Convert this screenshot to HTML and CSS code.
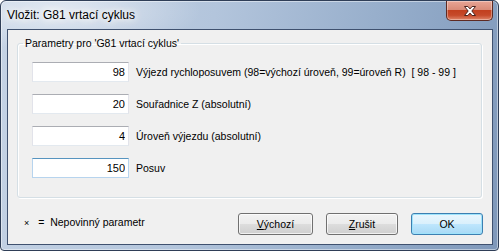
FILE: index.html
```html
<!DOCTYPE html>
<html lang="cs">
<head>
    <meta charset="UTF-8">
    <title>Vložit: G81 vrtací cyklus</title>
    <link rel="stylesheet" href="styles.css">
</head>
<body>
    <div class="window">
        <!-- Title bar -->
        <div class="titlebar">
            <span class="title">Vložit: G81 vrtací cyklus</span>
            <div class="close-btn">
                <svg width="14" height="12" viewBox="0 0 14 12">
                    <path d="M1.5 1.5h3.4l2.1 2.4 2.1-2.4h3.4l-3.7 4.5 3.7 4.5h-3.4l-2.1-2.4-2.1 2.4h-3.4l3.7-4.5z" fill="#fff" stroke="#4a221c" stroke-width="1" stroke-linejoin="round"/>
                </svg>
            </div>
        </div>

        <!-- Client area -->
        <div class="client">
            <fieldset class="group">
                <legend>Parametry pro 'G81 vrtací cyklus'</legend>
                <div class="row">
                    <input class="field" type="text" value="98">
                    <label>Výjezd rychloposuvem (98=výchozí úroveň, 99=úroveň R)&nbsp; [ 98 - 99 ]</label>
                </div>
                <div class="row">
                    <input class="field" type="text" value="20">
                    <label>Souřadnice Z (absolutní)</label>
                </div>
                <div class="row">
                    <input class="field" type="text" value="4">
                    <label>Úroveň výjezdu (absolutní)</label>
                </div>
                <div class="row">
                    <input class="field hover" type="text" value="150">
                    <label>Posuv</label>
                </div>
            </fieldset>

            <div class="footer">
                <div class="note"><span class="mark">×</span> = &nbsp;Nepovinný parametr</div>
                <div class="buttons">
                    <button class="btn wide"><u>V</u>ýchozí</button>
                    <button class="btn"><u>Z</u>rušit</button>
                    <button class="btn default">OK</button>
                </div>
            </div>
        </div>
    </div>
</body>
</html>
```

FILE: styles.css
```css
/* Global */
* {
    margin: 0;
    padding: 0;
    box-sizing: border-box;
}

body {
    font-family: "Liberation Sans", Arial, sans-serif;
    font-size: 10.5px;
    color: #000;
    background: #fff;
}

/* Window frame */
.window {
    width: 499px;
    height: 251px;
    display: flex;
    flex-direction: column;
    border: 1px solid #2f3e57;
    border-radius: 6px 6px 4px 4px;
    background:
        radial-gradient(ellipse 140px 40px at 60px 10px, rgba(255, 255, 255, 0.55), rgba(255, 255, 255, 0) 100%),
        linear-gradient(100deg, #c5d3e5 0%, #b3c5dc 40%, #93abc9 75%, #7f98ba 100%);
    box-shadow: inset 0 0 0 1px rgba(255, 255, 255, 0.45);
}

.titlebar {
    height: 28px;
    display: flex;
    justify-content: space-between;
    align-items: flex-start;
    padding-left: 6px;
}

.title {
    font-size: 12px;
    margin-top: 7px;
    color: #000;
    text-shadow: 0 0 6px #fff, 0 0 10px #fff, 0 0 14px #fff;
}

.close-btn {
    width: 47px;
    height: 20px;
    margin-right: 5px;
    display: flex;
    align-items: center;
    justify-content: center;
    border: 1px solid #5e2a22;
    border-top: none;
    border-radius: 0 0 5px 5px;
    background: linear-gradient(#e8a596 0%, #d98b78 45%, #c2401f 50%, #c64a2a 75%, #e0866a 100%);
    box-shadow: inset 0 0 0 1px rgba(255, 255, 255, 0.35);
}

/* Client area */
.client {
    flex: 1;
    margin: 0 5px 5px 6px;
    border: 1px solid #3f516f;
    background: #f0f0f0;
    display: flex;
    flex-direction: column;
}

.group {
    margin: 7px 10px 0 9px;
    height: 161px;
    padding: 13px 10px 0 14px;
    border: 1px solid #d5dfe5;
    border-radius: 3px;
    box-shadow: inset 1px 1px 0 #fff, 1px 1px 0 #fff;
    display: flex;
    flex-direction: column;
    gap: 12px;
}

.group legend {
    margin-left: -9px;
    padding: 0 2px;
}

.row {
    display: flex;
    align-items: center;
    gap: 7px;
    white-space: nowrap;
}

.field {
    width: 97px;
    height: 20px;
    padding: 0 3px;
    font: inherit;
    font-size: 11px;
    text-align: right;
    background: #fff;
    border: 1px solid #e2e3ea;
    border-top-color: #abadb3;
    border-bottom-color: #e3e9ef;
    outline: none;
}

.field.hover {
    border-color: #b7d4ee;
    border-top-color: #5794bf;
}

/* Footer */
.footer {
    flex: 1;
    display: flex;
    justify-content: space-between;
    align-items: flex-start;
    padding: 15px 9px 0 16px;
}

.note {
    margin-top: 3px;
}

.note .mark {
    font-size: 9px;
    margin-right: 6px;
}

.buttons {
    display: flex;
    gap: 13px;
}

.btn {
    width: 72px;
    height: 22px;
    font: inherit;
    color: #000;
    border: 1px solid #707070;
    border-radius: 3px;
    background: linear-gradient(#f2f2f2 0%, #ebebeb 50%, #dddddd 51%, #cfcfcf 100%);
    box-shadow: inset 0 0 0 1px rgba(255, 255, 255, 0.7);
}

.btn.wide {
    width: 75px;
}

.btn.default {
    border-color: #3c7fb1;
    background: linear-gradient(#eaf6fd 0%, #d9f0fc 50%, #bee6fd 51%, #a7d9f5 100%);
    box-shadow: inset 0 0 0 1px #9ee3fb;
}
```
